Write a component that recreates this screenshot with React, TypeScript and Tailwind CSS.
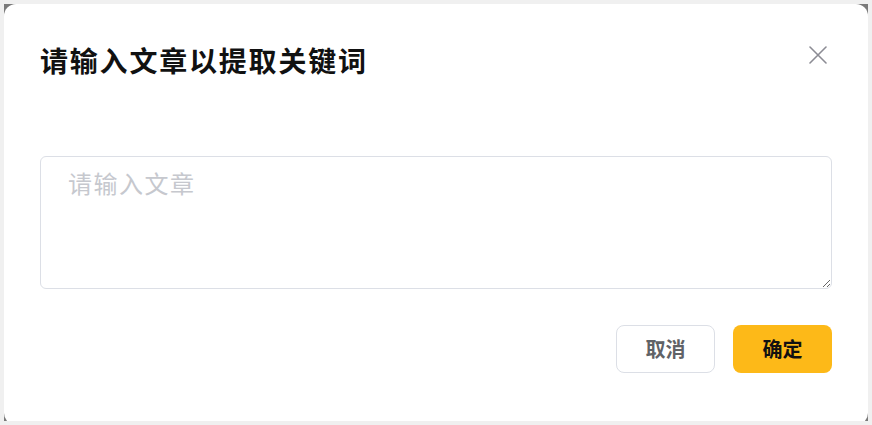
import { useState } from 'react';

const FONT = "font-['Noto_Sans_CJK_SC',_'Noto_Sans',_sans-serif]";

export default function App() {
  const [text, setText] = useState('');

  return (
    <div className={`h-[425px] w-[872px] bg-[#f0f0f0] p-1 ${FONT}`}>
      {/* dimmed backdrop behind the dialog */}
      <div className="h-full w-full overflow-hidden bg-[#7a7a7a]">
        <div className="flex h-[421px] flex-col rounded-xl bg-white px-9 pt-[38px]">
          {/* Header */}
          <div className="flex items-start justify-between">
            <h2 className="text-[28px] font-bold leading-9 tracking-[1.8px] text-[#111]">请输入文章以提取关键词</h2>
            <button className="mr-[5px] mt-[4px] text-[#8c8c94]" aria-label="关闭">
              <svg width="18" height="18" viewBox="0 0 18 18" fill="none" stroke="currentColor" strokeWidth={1.6} strokeLinecap="round">
                <path d="M1 1L17 17M17 1L1 17" />
              </svg>
            </button>
          </div>

          {/* Article input */}
          <textarea
            value={text}
            onChange={(e) => setText(e.target.value)}
            placeholder="请输入文章"
            className="mt-[78px] h-[133px] w-full rounded-md border border-[#dcdfe6] py-2 pl-[27px] pr-4 text-2xl leading-9 tracking-[1.5px] text-[#333] outline-none placeholder:text-[#c6c8ce]"
          />

          {/* Actions */}
          <div className="mt-9 flex justify-end gap-[18px]">
            <button className="h-12 w-[99px] rounded-lg border border-[#dcdfe6] bg-white text-xl font-bold text-[#606266]">
              取消
            </button>
            <button className="h-12 w-[99px] rounded-lg bg-[#fdb918] text-xl font-bold text-[#111]">
              确定
            </button>
          </div>
        </div>
      </div>
    </div>
  );
}
